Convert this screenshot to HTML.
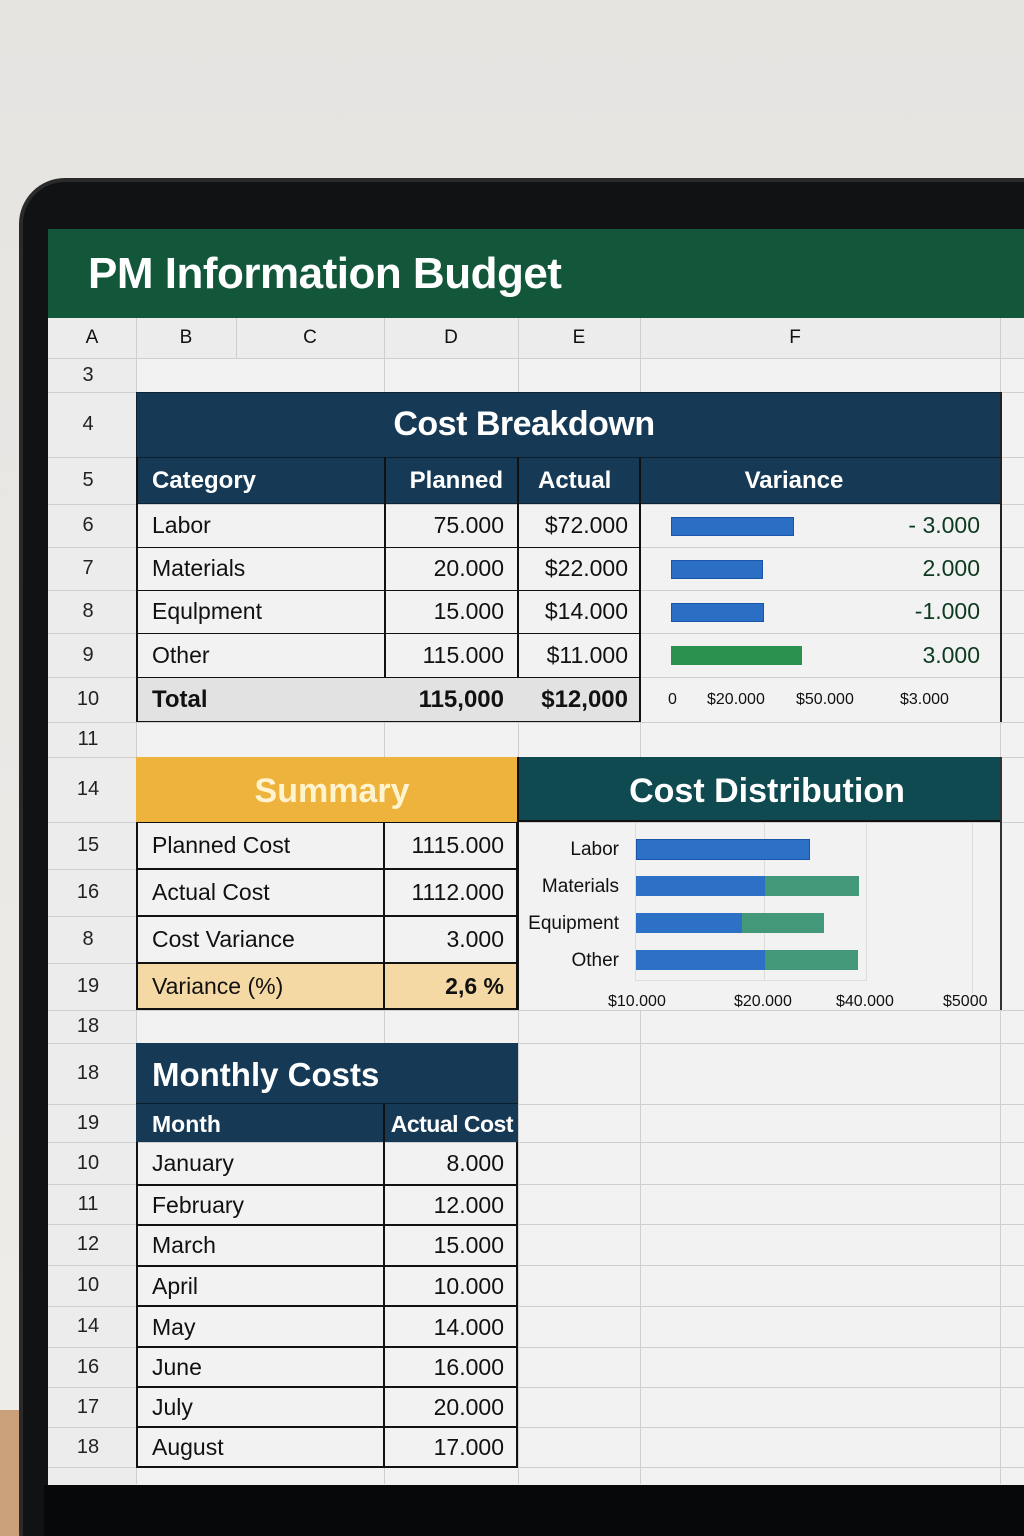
<!DOCTYPE html>
<html><head><meta charset="utf-8"><style>
*{margin:0;padding:0;box-sizing:border-box}
html,body{width:1024px;height:1536px;overflow:hidden}
body{position:relative;background:linear-gradient(#e6e4e1,#efedea);font-family:"Liberation Sans",sans-serif;color:#111}
.a{position:absolute}
.c{position:absolute;display:flex;align-items:center;white-space:nowrap}
.r{justify-content:flex-end}
.m{justify-content:center}
.vl{position:absolute;width:1px;background:#cfcfcf}
.hl{position:absolute;height:1px;background:#cfcfcf}
.n{position:absolute;left:48px;width:80px;text-align:center;font-size:20px;color:#222;display:flex;align-items:center;justify-content:center}
.bk{position:absolute;background:#111}
</style></head><body>
<div class="a" style="left:0;top:1410px;width:40px;height:126px;background:#c9a07a"></div>
<div class="a" style="left:19px;top:178px;width:1100px;height:1400px;background:#2a2a2a;border-radius:46px"></div>
<div class="a" style="left:23px;top:182px;width:1100px;height:1400px;background:#101213;border-radius:42px"></div>
<!-- screen -->
<div class="a" style="left:48px;top:229px;width:976px;height:1256px;background:#f2f2f2"></div>
<div class="a" style="left:48px;top:229px;width:976px;height:89px;background:#12573a"></div>
<div class="c" style="left:88px;top:229px;height:89px;font-size:44px;font-weight:bold;color:#fff;letter-spacing:-0.5px">PM Information Budget</div>
<!-- column header -->
<div class="a" style="left:48px;top:318px;width:976px;height:40px;background:#ececec"></div>
<div class="a" style="left:48px;top:358px;width:88px;height:1127px;background:#ececec"></div>
<div class="vl" style="left:136px;top:318px;height:1166px"></div>
<div class="vl" style="left:236px;top:318px;height:40px"></div>
<div class="vl" style="left:384px;top:318px;height:1166px"></div>
<div class="vl" style="left:518px;top:318px;height:1166px"></div>
<div class="vl" style="left:640px;top:318px;height:1166px"></div>
<div class="vl" style="left:1000px;top:318px;height:1166px"></div>
<div class="hl" style="left:48px;top:358px;width:976px"></div>
<div class="hl" style="left:48px;top:392px;width:976px"></div>
<div class="hl" style="left:48px;top:457px;width:976px"></div>
<div class="hl" style="left:48px;top:504px;width:976px"></div>
<div class="hl" style="left:48px;top:547px;width:976px"></div>
<div class="hl" style="left:48px;top:590px;width:976px"></div>
<div class="hl" style="left:48px;top:633px;width:976px"></div>
<div class="hl" style="left:48px;top:677px;width:976px"></div>
<div class="hl" style="left:48px;top:722px;width:976px"></div>
<div class="hl" style="left:48px;top:757px;width:976px"></div>
<div class="hl" style="left:48px;top:822px;width:976px"></div>
<div class="hl" style="left:48px;top:869px;width:90px"></div>
<div class="hl" style="left:48px;top:916px;width:90px"></div>
<div class="hl" style="left:48px;top:963px;width:90px"></div>
<div class="hl" style="left:48px;top:1010px;width:976px"></div>
<div class="hl" style="left:48px;top:1043px;width:976px"></div>
<div class="hl" style="left:48px;top:1104px;width:976px"></div>
<div class="hl" style="left:48px;top:1142px;width:976px"></div>
<div class="hl" style="left:48px;top:1184px;width:976px"></div>
<div class="hl" style="left:48px;top:1224px;width:976px"></div>
<div class="hl" style="left:48px;top:1265px;width:976px"></div>
<div class="hl" style="left:48px;top:1306px;width:976px"></div>
<div class="hl" style="left:48px;top:1347px;width:976px"></div>
<div class="hl" style="left:48px;top:1387px;width:976px"></div>
<div class="hl" style="left:48px;top:1427px;width:976px"></div>
<div class="hl" style="left:48px;top:1467px;width:976px"></div>
<div class="c m" style="left:48px;top:318px;width:88px;height:40px;font-size:19px">A</div>
<div class="c m" style="left:136px;top:318px;width:100px;height:40px;font-size:19px">B</div>
<div class="c m" style="left:236px;top:318px;width:148px;height:40px;font-size:19px">C</div>
<div class="c m" style="left:384px;top:318px;width:134px;height:40px;font-size:19px">D</div>
<div class="c m" style="left:518px;top:318px;width:122px;height:40px;font-size:19px">E</div>
<div class="c m" style="left:640px;top:318px;width:310px;height:40px;font-size:19px">F</div>
<div class="n" style="top:358px;height:34px">3</div>
<div class="n" style="top:392px;height:65px">4</div>
<div class="n" style="top:457px;height:47px">5</div>
<div class="n" style="top:504px;height:43px">6</div>
<div class="n" style="top:547px;height:43px">7</div>
<div class="n" style="top:590px;height:43px">8</div>
<div class="n" style="top:633px;height:44px">9</div>
<div class="n" style="top:677px;height:45px">10</div>
<div class="n" style="top:722px;height:35px">11</div>
<div class="n" style="top:757px;height:65px">14</div>
<div class="n" style="top:822px;height:47px">15</div>
<div class="n" style="top:869px;height:47px">16</div>
<div class="n" style="top:916px;height:47px">8</div>
<div class="n" style="top:963px;height:47px">19</div>
<div class="n" style="top:1010px;height:33px">18</div>
<div class="n" style="top:1043px;height:61px">18</div>
<div class="n" style="top:1104px;height:38px">19</div>
<div class="n" style="top:1142px;height:42px">10</div>
<div class="n" style="top:1184px;height:40px">11</div>
<div class="n" style="top:1224px;height:41px">12</div>
<div class="n" style="top:1265px;height:41px">10</div>
<div class="n" style="top:1306px;height:41px">14</div>
<div class="n" style="top:1347px;height:40px">16</div>
<div class="n" style="top:1387px;height:40px">17</div>
<div class="n" style="top:1427px;height:40px">18</div>

<!-- Cost Breakdown -->
<div class="a" style="left:136px;top:392px;width:865px;height:112px;background:#163a56;border:1px solid #0d2233"></div>
<div class="c m" style="left:392px;top:392px;width:264px;height:65px;font-size:34px;font-weight:bold;color:#fff;letter-spacing:-0.5px">Cost Breakdown</div>
<div class="a" style="left:136px;top:457px;width:865px;height:1px;background:#0b1e2c"></div>
<div class="a" style="left:384px;top:457px;width:2px;height:265px;background:#111"></div>
<div class="a" style="left:517px;top:457px;width:2px;height:265px;background:#111"></div>
<div class="a" style="left:639px;top:457px;width:2px;height:265px;background:#111"></div>
<div class="a" style="left:1000px;top:392px;width:2px;height:330px;background:#222"></div>
<div class="a" style="left:136px;top:457px;width:2px;height:265px;background:#111"></div>
<div class="c" style="left:152px;top:457px;height:47px;font-size:24px;color:#fff;font-weight:bold">Category</div>
<div class="c r" style="left:384px;top:457px;width:119px;height:47px;font-size:24px;color:#fff;font-weight:bold">Planned</div>
<div class="c" style="left:538px;top:457px;height:47px;font-size:24px;color:#fff;font-weight:bold">Actual</div>
<div class="c m" style="left:640px;top:457px;width:308px;height:47px;font-size:24px;color:#fff;font-weight:bold">Variance</div>
<div class="a" style="left:138px;top:678px;width:501px;height:43px;background:#e2e2e2"></div>
<div class="bk" style="left:136px;top:547px;width:504px;height:1px"></div>
<div class="bk" style="left:136px;top:590px;width:504px;height:1px"></div>
<div class="bk" style="left:136px;top:633px;width:504px;height:1px"></div>
<div class="bk" style="left:136px;top:677px;width:504px;height:1px"></div>
<div class="bk" style="left:136px;top:721px;width:504px;height:1px"></div>
<div class="c" style="left:152px;top:504px;height:43px;font-size:23px">Labor</div>
<div class="c" style="left:152px;top:547px;height:43px;font-size:23px">Materials</div>
<div class="c" style="left:152px;top:590px;height:43px;font-size:23px">Equlpment</div>
<div class="c" style="left:152px;top:633px;height:44px;font-size:23px">Other</div>
<div class="c" style="left:152px;top:677px;height:45px;font-size:24px;font-weight:bold">Total</div>
<div class="c r" style="left:384px;top:504px;width:120px;height:43px;font-size:23px">75.000</div>
<div class="c r" style="left:384px;top:547px;width:120px;height:43px;font-size:23px">20.000</div>
<div class="c r" style="left:384px;top:590px;width:120px;height:43px;font-size:23px">15.000</div>
<div class="c r" style="left:384px;top:633px;width:120px;height:44px;font-size:23px">115.000</div>
<div class="c r" style="left:384px;top:677px;width:120px;height:45px;font-size:24px;font-weight:bold">115,000</div>
<div class="c r" style="left:518px;top:504px;width:110px;height:43px;font-size:23px">$72.000</div>
<div class="c r" style="left:518px;top:547px;width:110px;height:43px;font-size:23px">$22.000</div>
<div class="c r" style="left:518px;top:590px;width:110px;height:43px;font-size:23px">$14.000</div>
<div class="c r" style="left:518px;top:633px;width:110px;height:44px;font-size:23px">$11.000</div>
<div class="c r" style="left:518px;top:677px;width:110px;height:45px;font-size:24px;font-weight:bold">$12,000</div>
<div class="a" style="left:671px;top:517px;width:123px;height:19px;background:#2a6fc4;border:1px solid #1b55a8"></div>
<div class="a" style="left:671px;top:560px;width:92px;height:19px;background:#2a6fc4;border:1px solid #1b55a8"></div>
<div class="a" style="left:671px;top:603px;width:93px;height:19px;background:#2a6fc4;border:1px solid #1b55a8"></div>
<div class="a" style="left:671px;top:646px;width:131px;height:19px;background:#2a914e"></div>
<div class="c r" style="left:800px;top:504px;width:180px;height:43px;font-size:23px;color:#0d3a1f">- 3.000</div>
<div class="c r" style="left:800px;top:547px;width:180px;height:43px;font-size:23px;color:#0d3a1f">2.000</div>
<div class="c r" style="left:800px;top:590px;width:180px;height:43px;font-size:23px;color:#0d3a1f">-1.000</div>
<div class="c r" style="left:800px;top:633px;width:180px;height:44px;font-size:23px;color:#0d3a1f">3.000</div>
<div class="c" style="left:668px;top:677px;height:45px;font-size:16px">0</div>
<div class="c" style="left:707px;top:677px;height:45px;font-size:16px">$20.000</div>
<div class="c" style="left:796px;top:677px;height:45px;font-size:16px">$50.000</div>
<div class="c" style="left:900px;top:677px;height:45px;font-size:16px">$3.000</div>

<!-- Summary -->
<div class="a" style="left:136px;top:757px;width:382px;height:65px;background:#eeb33d"></div>
<div class="c m" style="left:136px;top:757px;width:392px;height:68px;font-size:34px;font-weight:bold;color:#fff4cf">Summary</div>
<div class="a" style="left:518px;top:757px;width:483px;height:65px;background:#0f4a50;border-bottom:2px solid #111"></div>
<div class="c m" style="left:518px;top:757px;width:498px;height:68px;font-size:34px;font-weight:bold;color:#fff">Cost Distribution</div>
<div class="a" style="left:136px;top:963px;width:382px;height:47px;background:#f5d9a4"></div>
<div class="a" style="left:136px;top:822px;width:382px;height:188px;border:2px solid #111;border-top:1px solid #111"></div>
<div class="bk" style="left:383px;top:822px;width:2px;height:188px"></div>
<div class="bk" style="left:136px;top:868px;width:382px;height:2px"></div>
<div class="bk" style="left:136px;top:915px;width:382px;height:2px"></div>
<div class="bk" style="left:136px;top:962px;width:382px;height:2px"></div>
<div class="bk" style="left:517px;top:757px;width:2px;height:253px"></div>
<div class="bk" style="left:1000px;top:757px;width:2px;height:253px;background:#333"></div>
<div class="c" style="left:152px;top:822px;height:47px;font-size:23px">Planned Cost</div>
<div class="c" style="left:152px;top:869px;height:47px;font-size:23px">Actual Cost</div>
<div class="c" style="left:152px;top:916px;height:47px;font-size:23px">Cost Variance</div>
<div class="c" style="left:152px;top:963px;height:47px;font-size:23px">Variance (%)</div>
<div class="c r" style="left:384px;top:822px;width:120px;height:47px;font-size:23px">1115.000</div>
<div class="c r" style="left:384px;top:869px;width:120px;height:47px;font-size:23px">1112.000</div>
<div class="c r" style="left:384px;top:916px;width:120px;height:47px;font-size:23px">3.000</div>
<div class="c r" style="left:384px;top:963px;width:120px;height:47px;font-size:23px;font-weight:bold">2,6 %</div>
<div class="a" style="left:519px;top:823px;width:481px;height:187px;background:#f2f2f2"></div>
<div class="vl" style="left:635px;top:823px;height:158px;background:#ddd"></div>
<div class="vl" style="left:764px;top:823px;height:158px;background:#ddd"></div>
<div class="vl" style="left:866px;top:823px;height:158px;background:#ddd"></div>
<div class="vl" style="left:972px;top:823px;height:185px;background:#ddd"></div>
<div class="hl" style="left:635px;top:980px;width:232px;background:#ddd"></div>
<div class="c r" style="left:520px;top:839px;width:99px;height:22px;font-size:19px">Labor</div>
<div class="c r" style="left:520px;top:876px;width:99px;height:22px;font-size:19px">Materials</div>
<div class="c r" style="left:520px;top:913px;width:99px;height:22px;font-size:19px">Equipment</div>
<div class="c r" style="left:520px;top:950px;width:99px;height:22px;font-size:19px">Other</div>
<div class="a" style="left:636px;top:839px;width:174px;height:21px;background:#2c71c5;border:1px solid #1b55a8"></div>
<div class="a" style="left:636px;top:876px;width:129px;height:20px;background:#2c71c5"></div>
<div class="a" style="left:765px;top:876px;width:94px;height:20px;background:#43987a"></div>
<div class="a" style="left:636px;top:913px;width:106px;height:20px;background:#2c71c5"></div>
<div class="a" style="left:742px;top:913px;width:82px;height:20px;background:#43987a"></div>
<div class="a" style="left:636px;top:950px;width:129px;height:20px;background:#2c71c5"></div>
<div class="a" style="left:765px;top:950px;width:93px;height:20px;background:#43987a"></div>
<div class="c" style="left:608px;top:992px;height:20px;font-size:16px">$10.000</div>
<div class="c" style="left:734px;top:992px;height:20px;font-size:16px">$20.000</div>
<div class="c" style="left:836px;top:992px;height:20px;font-size:16px">$40.000</div>
<div class="c" style="left:943px;top:992px;height:20px;font-size:16px">$5000</div>

<!-- Monthly Costs -->
<div class="a" style="left:136px;top:1043px;width:382px;height:99px;background:#163a56"></div>
<div class="a" style="left:136px;top:1103px;width:382px;height:1px;background:#0b1e2c"></div>
<div class="c" style="left:152px;top:1043px;height:63px;font-size:33px;font-weight:bold;color:#fff">Monthly Costs</div>
<div class="c" style="left:152px;top:1104px;height:40px;font-size:23px;font-weight:bold;color:#fff">Month</div>
<div class="c r" style="left:384px;top:1104px;width:129px;height:40px;font-size:23px;font-weight:bold;color:#fff;letter-spacing:-0.5px">Actual Cost</div>
<div class="a" style="left:136px;top:1142px;width:382px;height:326px;border:2px solid #111;border-top:0"></div>
<div class="bk" style="left:383px;top:1104px;width:2px;height:364px"></div>
<div class="bk" style="left:136px;top:1184px;width:382px;height:2px"></div>
<div class="bk" style="left:136px;top:1224px;width:382px;height:2px"></div>
<div class="bk" style="left:136px;top:1265px;width:382px;height:2px"></div>
<div class="bk" style="left:136px;top:1305px;width:382px;height:2px"></div>
<div class="bk" style="left:136px;top:1346px;width:382px;height:2px"></div>
<div class="bk" style="left:136px;top:1386px;width:382px;height:2px"></div>
<div class="bk" style="left:136px;top:1426px;width:382px;height:2px"></div>
<div class="c" style="left:152px;top:1142px;height:42px;font-size:23px">January</div>
<div class="c" style="left:152px;top:1184px;height:42px;font-size:23px">February</div>
<div class="c" style="left:152px;top:1224px;height:42px;font-size:23px">March</div>
<div class="c" style="left:152px;top:1265px;height:42px;font-size:23px">April</div>
<div class="c" style="left:152px;top:1306px;height:42px;font-size:23px">May</div>
<div class="c" style="left:152px;top:1347px;height:41px;font-size:23px">June</div>
<div class="c" style="left:152px;top:1387px;height:41px;font-size:23px">July</div>
<div class="c" style="left:152px;top:1427px;height:41px;font-size:23px">August</div>
<div class="c r" style="left:384px;top:1142px;width:120px;height:42px;font-size:23px">8.000</div>
<div class="c r" style="left:384px;top:1184px;width:120px;height:42px;font-size:23px">12.000</div>
<div class="c r" style="left:384px;top:1224px;width:120px;height:42px;font-size:23px">15.000</div>
<div class="c r" style="left:384px;top:1265px;width:120px;height:42px;font-size:23px">10.000</div>
<div class="c r" style="left:384px;top:1306px;width:120px;height:42px;font-size:23px">14.000</div>
<div class="c r" style="left:384px;top:1347px;width:120px;height:41px;font-size:23px">16.000</div>
<div class="c r" style="left:384px;top:1387px;width:120px;height:41px;font-size:23px">20.000</div>
<div class="c r" style="left:384px;top:1427px;width:120px;height:41px;font-size:23px">17.000</div>
<div class="a" style="left:44px;top:1485px;width:980px;height:51px;background:#070809"></div>
</body></html>
